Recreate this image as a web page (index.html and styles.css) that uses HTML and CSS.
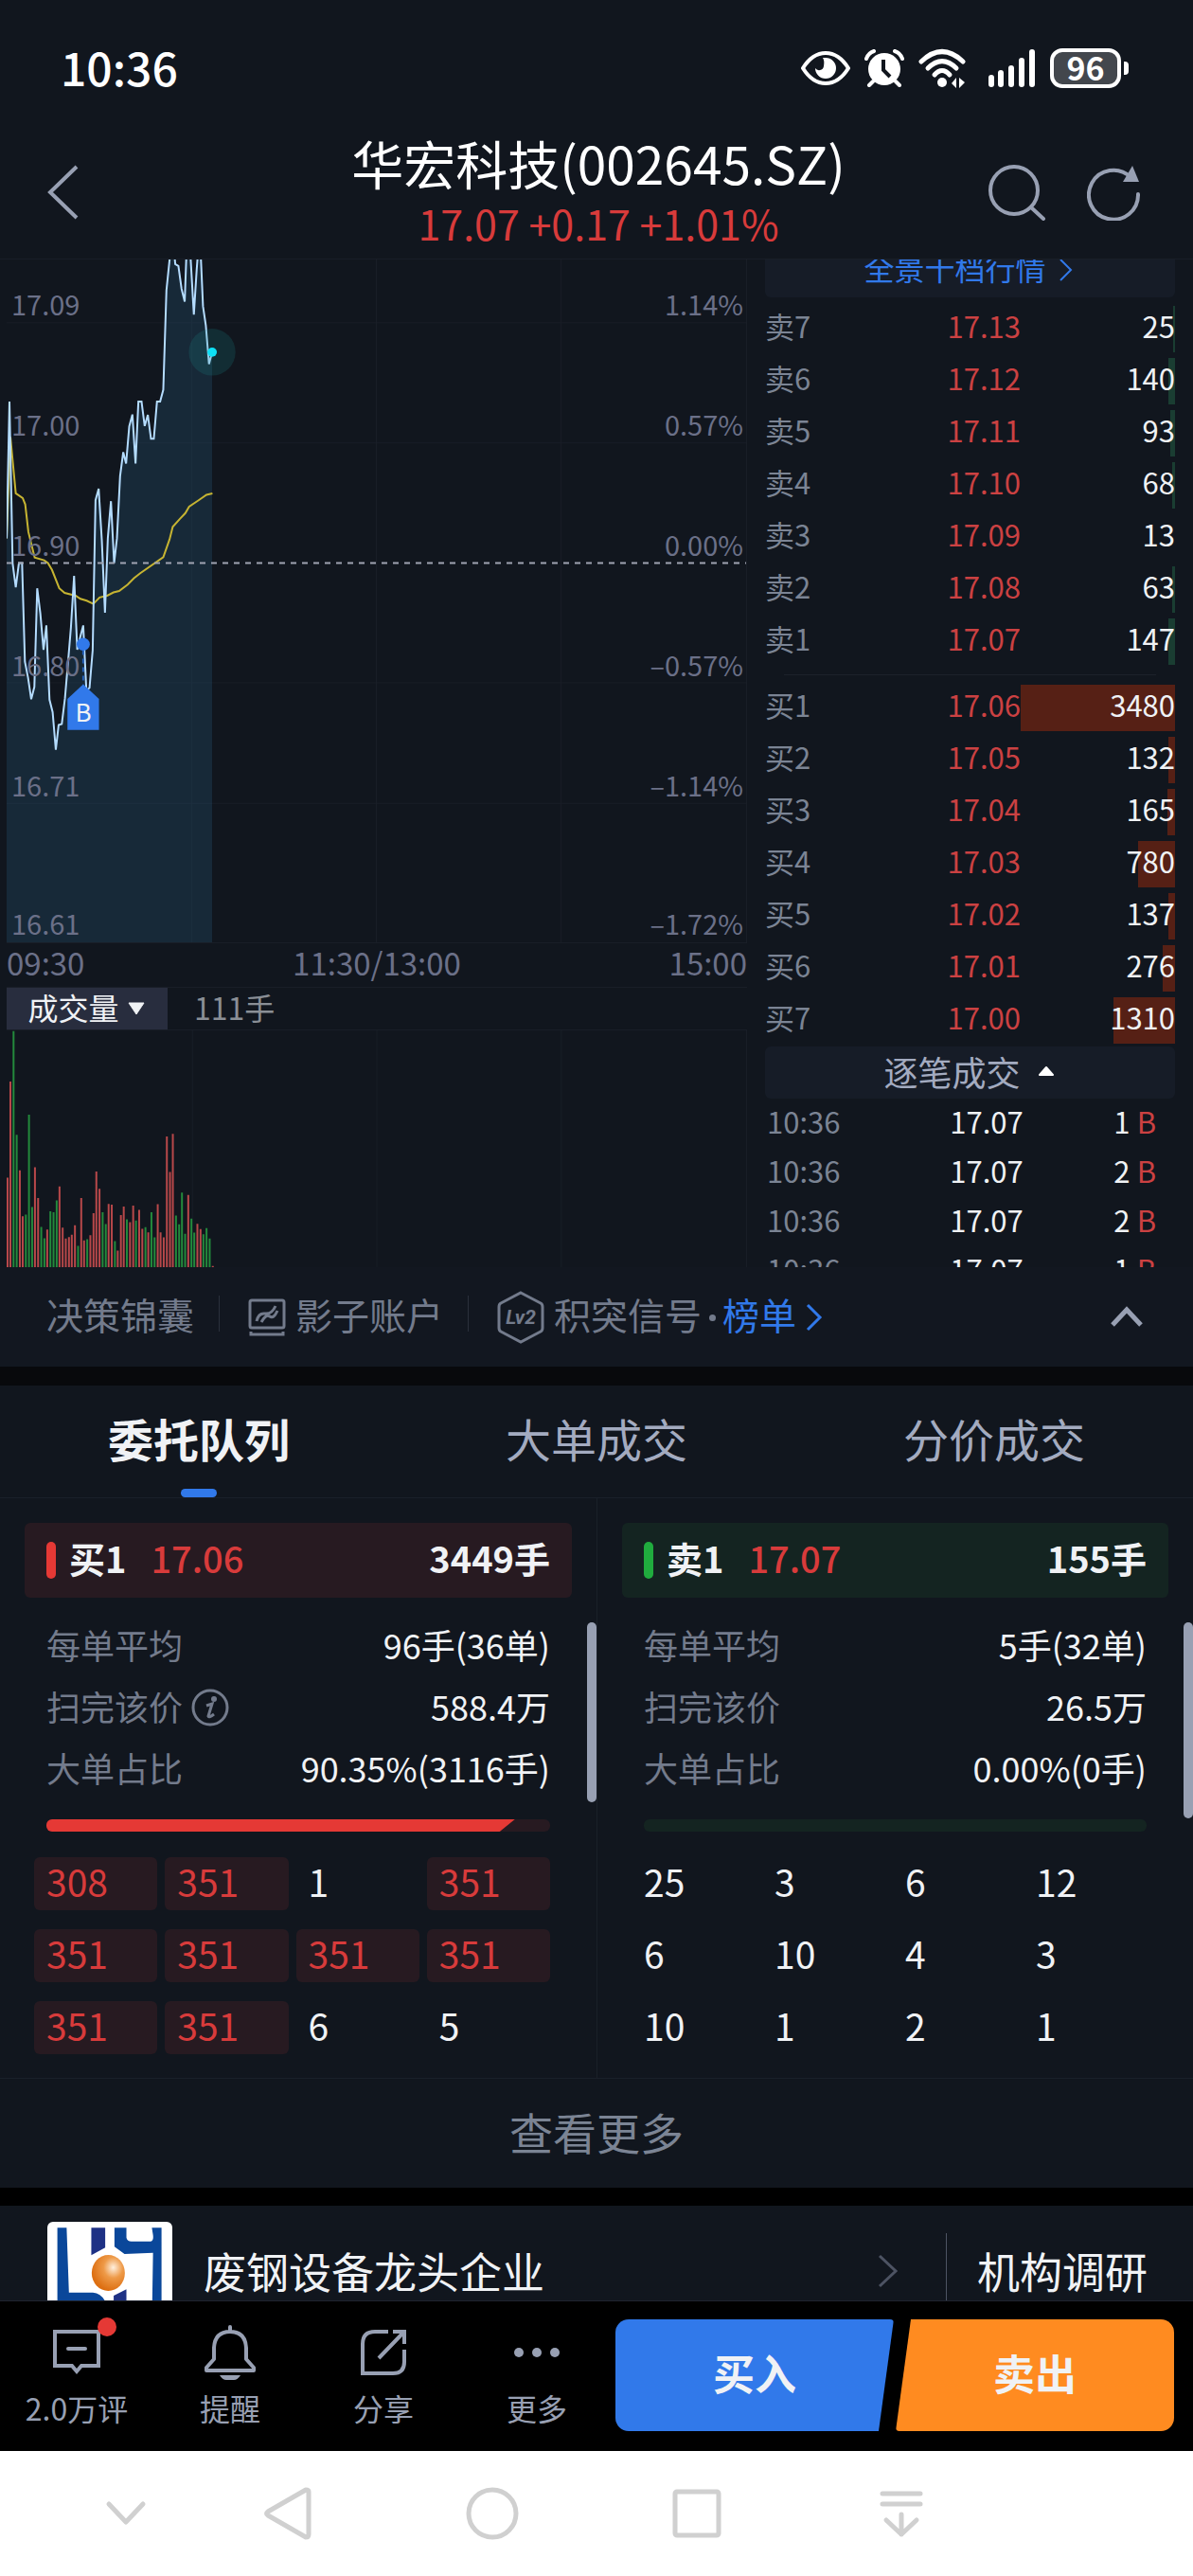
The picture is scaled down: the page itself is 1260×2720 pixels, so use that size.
FILE: index.html
```html
<!DOCTYPE html>
<html lang="zh-CN">
<head>
    <meta charset="UTF-8">
    <meta name="viewport" content="width=device-width, initial-scale=1">
    <title>华宏科技(002645.SZ)</title>
    <link rel="stylesheet" href="styles.css">
</head>
<body>
<!-- 状态栏 -->
<div class="status">
    <span class="clock">10:36</span>
    <div class="status-icons">
        <svg width="52" height="40" viewBox="0 0 52 40"><path d="M2 20Q12 4 26 4T50 20Q40 36 26 36T2 20Z" fill="none" stroke="#fff" stroke-width="4"/><path d="M26 9A11 11 0 1 1 15 20A5 5 0 0 0 24 18Q25 12 23 9Z" fill="#fff"/></svg>
        <svg width="42" height="40" viewBox="0 0 42 40"><circle cx="21" cy="21" r="17" fill="#fff"/><path d="M2 10Q4 4 10 2M40 10Q38 4 32 2M9 34L5 38M33 34L37 38" fill="none" stroke="#fff" stroke-width="4" stroke-linecap="round"/><path d="M20 11V22L27 29" fill="none" stroke="#11161e" stroke-width="4"/></svg>
        <svg width="58" height="42" viewBox="0 0 58 42"><g fill="none" stroke="#fff" stroke-width="5" stroke-linecap="round"><path d="M3 14Q25 -7 47 14"/><path d="M10 21Q25 6 40 21"/><path d="M17 28Q25 19 33 28"/></g><circle cx="25" cy="36" r="5" fill="#fff"/><path d="M35 37L40 31V42ZM43 31V42L49 36Z" fill="#fff"/></svg>
        <svg width="51" height="42" viewBox="0 0 51 42"><path d="M4 31V38M14 26V38M25 21V38M36 13V38M47 4V38" stroke="#fff" stroke-width="6" stroke-linecap="round"/></svg>
        <span class="battery">96</span>
    </div>
</div>

<!-- 标题 -->
<header class="header">
    <button class="icon-btn" aria-label="返回"><svg width="34" height="58" viewBox="0 0 34 58"><path d="M31 2L3 29L31 56" fill="none" stroke="#98a0b3" stroke-width="4"/></svg></button>
    <div class="title">
        <h1>华宏科技(002645.SZ)</h1>
        <p>17.07 +0.17 +1.01%</p>
    </div>
    <div class="header-right">
        <button class="icon-btn" aria-label="搜索"><svg width="62" height="60" viewBox="0 0 62 60"><circle cx="27" cy="28" r="25" fill="none" stroke="#98a0b3" stroke-width="4"/><path d="M45 46L58 58" stroke="#98a0b3" stroke-width="4" stroke-linecap="round"/></svg></button>
        <button class="icon-btn" aria-label="刷新"><svg width="58" height="60" viewBox="0 0 58 60"><path d="M46 14A26 26 0 1 0 54 32" fill="none" stroke="#98a0b3" stroke-width="4" stroke-linecap="round"/><path d="M48 2L55 19L38 19Z" fill="#98a0b3"/></svg></button>
    </div>
</header>

<!-- 行情 -->
<main class="quote">
    <section class="charts">
        <div class="price-chart">
            <svg class="plot" viewBox="21 28 2346 1489" preserveAspectRatio="none">
                <path class="grid" d="M21 166H2367M21 428H2367M21 951H2367M21 1214H2367M608 28V1517M1194 28V1517M1780 28V1517"/>
                <path class="area" d="M21 636L30 338L40 690L50 743L60 690H70L79 905L89 940L99 987L109 960L118 745L128 800L138 879L147 826L157 988L167 1015L177 1097L186 1043L196 1041L206 985L216 905L225 830L235 718L245 879L255 850L264 826L274 968L284 962L294 880L303 553L313 528L323 640L333 798L342 636L352 555L362 690L371 636L381 500L391 448L400 473L410 392L420 366L430 473L439 338H449L459 391L469 367L479 419H488L498 338H508L518 312L528 95L540 15H553L556 38L566 42L576 92L586 120L592 5H603L615 148L624 50L629 5H636L644 130L653 172L663 256L673 230V1517H21Z"/>
                <path class="avg" d="M21 636L33 415L50 538L72 548L80 562L90 622L100 650L110 678L140 684L152 690L165 705L188 745L205 755L240 761L255 768L275 772L296 779L316 765L340 761L360 754L378 751L405 737L425 723L445 712L518 677L538 638L548 611L570 594L588 581L600 567L630 553L655 541L674 538"/>
                <path class="price" d="M21 636L30 338L40 690L50 743L60 690H70L79 905L89 940L99 987L109 960L118 745L128 800L138 879L147 826L157 988L167 1015L177 1097L186 1043L196 1041L206 985L216 905L225 830L235 718L245 879L255 850L264 826L274 968L284 962L294 880L303 553L313 528L323 640L333 798L342 636L352 555L362 690L371 636L381 500L391 448L400 473L410 392L420 366L430 473L439 338H449L459 391L469 367L479 419H488L498 338H508L518 312L528 95L540 15H553L556 38L566 42L576 92L586 120L592 5H603L615 148L624 50L629 5H636L644 130L653 172L663 256L673 230"/>
                <path class="zero" d="M21 690H2367"/>
                <ellipse class="glow" cx="673" cy="230" rx="74" ry="51"/>
                <ellipse cx="673" cy="230" rx="15" ry="10" fill="#0ee0f5"/>
                <path class="stem" d="M264 880V955"/>
                <ellipse cx="264" cy="867" rx="21" ry="14" fill="#3179ea"/>
                <path d="M264 954L314 986V1054H214V986Z" fill="#3179ea"/>
            </svg>
            <span class="marker">B</span>
            <div class="scale">
                <p><span>17.09</span><span>1.14%</span></p>
                <p><span>17.00</span><span>0.57%</span></p>
                <p><span>16.90</span><span>0.00%</span></p>
                <p><span>16.80</span><span>–0.57%</span></p>
                <p><span>16.71</span><span>–1.14%</span></p>
                <p><span>16.61</span><span>–1.72%</span></p>
            </div>
        </div>
        <div class="times"><span>09:30</span><span>11:30/13:00</span><span>15:00</span></div>
        <div class="vol-head">
            <button class="vol-btn">成交量<svg width="18" height="14" viewBox="0 0 18 14"><path d="M1 1H17L9 13Z" fill="#f0f2f5" stroke="#f0f2f5" stroke-linejoin="round"/></svg></button>
            <span>111手</span>
        </div>
        <svg class="vol-chart" viewBox="18 320 2349 753" preserveAspectRatio="none">
            <path class="grid" d="M608 320V1073M1194 320V1073M1780 320V1073"/>
            <path class="bar-red" d="M21 788V1073M30 483V1073M60 765V1073M69 911V1073M108 755V1073M118 853V1073M147 953V1073M186 816V1073M196 947V1073M206 982V1073M216 977V1073M225 970V1073M235 940V1073M255 853V1073M264 988V1073M284 971V1073M294 901V1073M303 769V1073M313 824V1073M342 872V1073M352 874V1073M371 1020V1073M381 907V1073M390 880V1073M410 930V1073M420 877V1073M439 891V1073M449 951V1073M468 962V1073M498 873V1073M507 962V1073M517 978V1073M527 657V1073M537 770V1073M546 649V1073M595 843V1073M624 935V1073M634 952V1073M673 1069V1073"/>
            <path class="bar-green" d="M40 322V1073M50 652V1073M79 906V1073M89 588V1073M99 882V1073M128 945V1073M138 981V1073M157 895V1073M167 898V1073M177 861V1073M245 1005V1073M274 984V1073M323 898V1073M333 936V1073M362 990V1073M400 921V1073M429 925V1073M459 946V1073M478 898V1073M488 978V1073M556 909V1073M566 937V1073M575 836V1073M585 967V1073M605 919V1073M614 963V1073M643 968V1073M653 949V1073M663 982V1073"/>
        </svg>
    </section>

    <section class="book">
        <a class="depth-link" href="#">全景十档行情<svg width="14" height="24" viewBox="0 0 14 24"><path d="M1 1L12 12L1 23" fill="none" stroke="#3179ea" stroke-width="2"/></svg></a>
        <table class="levels sell">
            <tr><th>卖7</th><td>17.13</td><td><i style="width:1%"></i><b>25</b></td></tr>
            <tr><th>卖6</th><td>17.12</td><td><i style="width:4%"></i><b>140</b></td></tr>
            <tr><th>卖5</th><td>17.11</td><td><i style="width:3%"></i><b>93</b></td></tr>
            <tr><th>卖4</th><td>17.10</td><td><i style="width:2%"></i><b>68</b></td></tr>
            <tr><th>卖3</th><td>17.09</td><td><b>13</b></td></tr>
            <tr><th>卖2</th><td>17.08</td><td><i style="width:2%"></i><b>63</b></td></tr>
            <tr><th>卖1</th><td>17.07</td><td><i style="width:4%"></i><b>147</b></td></tr>
        </table>
        <hr>
        <table class="levels buy">
            <tr><th>买1</th><td>17.06</td><td><i style="width:100%"></i><b>3480</b></td></tr>
            <tr><th>买2</th><td>17.05</td><td><i style="width:4%"></i><b>132</b></td></tr>
            <tr><th>买3</th><td>17.04</td><td><i style="width:5%"></i><b>165</b></td></tr>
            <tr><th>买4</th><td>17.03</td><td><i style="width:24%"></i><b>780</b></td></tr>
            <tr><th>买5</th><td>17.02</td><td><i style="width:4%"></i><b>137</b></td></tr>
            <tr><th>买6</th><td>17.01</td><td><i style="width:8%"></i><b>276</b></td></tr>
            <tr><th>买7</th><td>17.00</td><td><i style="width:40%"></i><b>1310</b></td></tr>
        </table>
        <button class="tick-head">逐笔成交<svg width="18" height="12" viewBox="0 0 18 12"><path d="M2 10H16L9 2Z" fill="#fff" stroke="#fff" stroke-width="2" stroke-linejoin="round"/></svg></button>
        <table class="ticks">
            <tr><th>10:36</th><td>17.07</td><td>1</td><td>B</td></tr>
            <tr><th>10:36</th><td>17.07</td><td>2</td><td>B</td></tr>
            <tr><th>10:36</th><td>17.07</td><td>2</td><td>B</td></tr>
            <tr><th>10:36</th><td>17.07</td><td>1</td><td>B</td></tr>
        </table>
    </section>
</main>

<!-- 工具条 -->
<nav class="tools">
    <a href="#">决策锦囊</a>
    <a href="#"><svg width="40" height="42" viewBox="0 0 40 42"><rect x="2" y="3" width="36" height="29" rx="2" fill="none" stroke="#737b8c" stroke-width="3"/><path d="M3 36V39H37V36M9 25Q11 16 18 17T29 9M14 26Q19 17 23 20T31 14" fill="none" stroke="#737b8c" stroke-width="3"/></svg>影子账户</a>
    <a href="#"><svg width="50" height="56" viewBox="0 0 50 56"><path d="M25 2L46 13Q48 14 48 17V39Q48 42 46 43L25 54L4 43Q2 42 2 39V17Q2 14 4 13Z" fill="none" stroke="#737b8c" stroke-width="3"/><text x="25" y="35" text-anchor="middle">Lv2</text></svg><span>积突信号<span class="dot"></span><em>榜单</em></span><svg width="18" height="30" viewBox="0 0 18 30"><path d="M2 2L15 15L2 28" fill="none" stroke="#3179ea" stroke-width="3"/></svg></a>
    <button class="icon-btn" aria-label="展开"><svg width="36" height="24" viewBox="0 0 36 24"><path d="M3 20L18 4L33 20" fill="none" stroke="#98a0b3" stroke-width="5"/></svg></button>
</nav>

<!-- 委托队列 -->
<section class="queue">
    <div class="tabs">
        <button class="tab on">委托队列</button>
        <button class="tab">大单成交</button>
        <button class="tab">分价成交</button>
    </div>
    <div class="panels">
        <div class="panel red">
            <div class="panel-head"><i></i><b>买1</b><strong>17.06</strong><b class="total">3449手</b></div>
            <dl>
                <div><dt>每单平均</dt><dd>96手(36单)</dd></div>
                <div><dt>扫完该价<svg width="42" height="42" viewBox="0 0 42 42"><circle cx="21" cy="21" r="18" fill="none" stroke="#737b8c" stroke-width="3"/><circle cx="25" cy="12" r="3" fill="#737b8c"/><path d="M17 19L23 17L19 30Q20 32 25 28" fill="none" stroke="#737b8c" stroke-width="3"/></svg></dt><dd>588.4万</dd></div>
                <div><dt>大单占比</dt><dd>90.35%(3116手)</dd></div>
            </dl>
            <div class="progress"><i style="width:93%"></i></div>
            <div class="orders">
                <span class="big">308</span><span class="big">351</span><span>1</span><span class="big">351</span>
                <span class="big">351</span><span class="big">351</span><span class="big">351</span><span class="big">351</span>
                <span class="big">351</span><span class="big">351</span><span>6</span><span>5</span>
            </div>
            <span class="scroll"></span>
        </div>
        <div class="panel green">
            <div class="panel-head"><i></i><b>卖1</b><strong>17.07</strong><b class="total">155手</b></div>
            <dl>
                <div><dt>每单平均</dt><dd>5手(32单)</dd></div>
                <div><dt>扫完该价</dt><dd>26.5万</dd></div>
                <div><dt>大单占比</dt><dd>0.00%(0手)</dd></div>
            </dl>
            <div class="progress"></div>
            <div class="orders">
                <span>25</span><span>3</span><span>6</span><span>12</span>
                <span>6</span><span>10</span><span>4</span><span>3</span>
                <span>10</span><span>1</span><span>2</span><span>1</span>
            </div>
            <span class="scroll long"></span>
        </div>
    </div>
    <button class="more">查看更多</button>
</section>

<!-- 公司简介 -->
<section class="company">
    <svg class="logo" viewBox="122 108 324 396" preserveAspectRatio="none">
        <defs><radialGradient id="ball" cx="65%" cy="35%" r="65%"><stop offset="0" stop-color="#fff0df"/><stop offset="45%" stop-color="#ee9a48"/><stop offset="100%" stop-color="#dd6f12"/></radialGradient></defs>
        <path d="M148 127H172L178 332H240Q262 335 272 360H148Z" fill="#0a479a"/>
        <path d="M236 127H272V190L236 214Z" fill="#1e3185"/>
        <path d="M296 127H327V158Q329 170 340 170H390Q398 168 396 150L393 127H418V360H394L396 206L322 210L296 187Z" fill="#0a479a"/>
        <path d="M294 342L327 322V360H294Z" fill="#1e3185"/>
        <ellipse cx="280" cy="270" rx="43" ry="57" fill="url(#ball)"/>
    </svg>
    <a class="intro" href="#">废钢设备龙头企业<svg width="24" height="36" viewBox="0 0 24 36"><path d="M3 2L20 18L3 34" fill="none" stroke="#4d5363" stroke-width="3"/></svg></a>
    <a class="research" href="#">机构调研</a>
</section>

<!-- 底部操作 -->
<footer class="actions">
    <button class="act"><svg width="52" height="60" viewBox="0 0 52 60"><path d="M3 9H49V45H31L26 51L21 45H3Z" fill="none" stroke="#98a0b3" stroke-width="4"/><path d="M17 27H35" stroke="#98a0b3" stroke-width="4" stroke-linecap="round"/></svg><span>2.0万评</span><i class="badge"></i></button>
    <button class="act"><svg width="56" height="60" viewBox="0 0 56 60"><path d="M28 4V8M28 9Q12 9 11 26V38L3 47V50H53V47L45 38V26Q44 9 28 9Z" fill="none" stroke="#98a0b3" stroke-width="4" stroke-linejoin="round" stroke-linecap="round"/><path d="M17 55H39Q36 60 32 60H24Q20 60 17 55Z" fill="#98a0b3"/></svg><span>提醒</span></button>
    <button class="act"><svg width="52" height="60" viewBox="0 0 52 60"><path d="M31 9H17Q4 9 4 22V53H36Q48 53 48 41V28M36 9H48V22M47 10L21 37" fill="none" stroke="#98a0b3" stroke-width="4"/></svg><span>分享</span></button>
    <button class="act"><svg width="52" height="60" viewBox="0 0 52 60"><g fill="#98a0b3"><circle cx="7" cy="31" r="5"/><circle cx="26" cy="31" r="5"/><circle cx="45" cy="31" r="5"/></g></svg><span>更多</span></button>
    <div class="trade">
        <button class="buy-btn">买入</button>
        <button class="sell-btn">卖出</button>
    </div>
</footer>

<!-- 系统导航 -->
<nav class="sysnav">
    <button aria-label="收起"><svg width="44" height="28" viewBox="0 0 44 28"><path d="M4 4L22 23L40 4"/></svg></button>
    <button aria-label="返回"><svg width="52" height="58" viewBox="0 0 52 58"><path d="M45 4L5 27Q2 29 5 31L45 54Q48 54 48 51V6Q48 4 45 4Z"/></svg></button>
    <button aria-label="主页"><svg width="56" height="56" viewBox="0 0 56 56"><circle cx="28" cy="28" r="25"/></svg></button>
    <button aria-label="最近任务"><svg width="52" height="52" viewBox="0 0 52 52"><rect x="3" y="3" width="46" height="46" rx="2"/></svg></button>
    <button aria-label="下拉"><svg width="48" height="52" viewBox="0 0 48 52"><path d="M4 5H44M4 16H44M24 27V48M8 33L24 48L40 33"/></svg></button>
</nav>
</body>
</html>
```

FILE: styles.css
```css
*{
    box-sizing:border-box;
    padding:0;
    margin:0;
}

body{
    background-color:#11161e;
    color:#f0f2f5;
    font-family:"Noto Sans CJK SC", sans-serif;
    font-size:36px;
}

button{
    border:0;
    background:none;
    color:inherit;
    font:inherit;
    cursor:pointer;
}

a{
    color:inherit;
    text-decoration:none;
}

i, em{
    font-style:normal;
}

svg{
    display:block;
    flex:none;
}

.icon-btn{
    display:flex;
}

/* 状态栏 */
.status{
    display:flex;
    justify-content:space-between;
    align-items:center;
    height:139px;
    padding:5px 68px 0 64px;
    color:#fff;
}

.clock{
    padding-bottom:4px;
    font-size:48px;
    font-weight:500;
}

.status-icons{
    display:flex;
    align-items:center;
    gap:15px;
}

.battery{
    position:relative;
    width:75px;
    height:42px;
    margin-right:8px;
    border:4px solid #fff;
    border-radius:13px;
    background-color:#43474d;
    font-size:34px;
    font-weight:700;
    line-height:32px;
    text-align:center;
}

.battery::after{
    content:"";
    position:absolute;
    right:-12px;
    top:10px;
    width:5px;
    height:14px;
    border-radius:0 4px 4px 0;
    background-color:#fff;
}

/* 标题 */
.header{
    display:grid;
    grid-template-columns:170px 1fr 162px;
    align-items:center;
    height:135px;
    padding:0 54px 6px 50px;
    border-bottom:1px solid #191e27;
}

.title{
    text-align:center;
    white-space:nowrap;
}

.title h1{
    color:#fff;
    font-size:55px;
    font-weight:400;
    line-height:64px;
}

.title p{
    color:#d83b3b;
    font-size:43px;
    line-height:64px;
}

.header-right{
    display:flex;
    justify-content:flex-end;
    gap:42px;
}

/* 行情 */
.quote{
    display:grid;
    grid-template-columns:782fr 433fr;
    column-gap:19px;
    height:1064px;
    padding:0 19px 0 7px;
    overflow:hidden;
}

.price-chart{
    position:relative;
    height:722px;
    border-right:1px solid #191e27;
    border-bottom:1px solid #191e27;
}

.plot{
    width:100%;
    height:100%;
}

.plot path, .vol-chart path{
    vector-effect:non-scaling-stroke;
}

.grid{
    fill:none;
    stroke:#191e27;
    stroke-width:1px;
}

.area{
    fill:#2d6e96;
    fill-opacity:.22;
}

.price{
    fill:none;
    stroke:#b4dcff;
    stroke-width:2px;
}

.avg{
    fill:none;
    stroke:#c6b432;
    stroke-width:2px;
}

.zero{
    stroke:#a0a4b2;
    stroke-width:2px;
    stroke-dasharray:6 6;
}

.glow{
    fill:#1a8a8c;
    fill-opacity:.2;
}

.stem{
    stroke:#2560b8;
    stroke-width:2px;
    stroke-dasharray:5 4;
}

.marker{
    position:absolute;
    left:64px;
    top:460px;
    width:34px;
    font-size:26px;
    line-height:34px;
    text-align:center;
}

/* 坐标刻度, 压在曲线上 */
.scale{
    position:absolute;
    inset:0;
    display:grid;
    grid-template-rows:67px repeat(4, 127px) 146px;
    padding:0 3px 0 5px;
    color:#6b7088;
    font-size:29px;
    line-height:34px;
}

.scale p{
    display:flex;
    justify-content:space-between;
    align-items:flex-end;
    padding-bottom:4px;
}

.times{
    display:flex;
    justify-content:space-between;
    height:46px;
    color:#6b7088;
    font-size:33px;
    line-height:40px;
}

.vol-head{
    display:flex;
    gap:28px;
    height:46px;
    border-top:1px solid #191e27;
    border-bottom:1px solid #191e27;
    color:#8a8f96;
    font-size:32px;
    line-height:40px;
}

.vol-btn{
    display:flex;
    align-items:center;
    justify-content:center;
    gap:9px;
    width:170px;
    padding:0 2px 4px 0;
    background-color:#282d3e;
    color:#f0f2f5;
}

.vol-btn svg{
    margin-top:4px;
}

.vol-chart{
    width:100%;
    height:250px;
    border-right:1px solid #191e27;
}

.bar-red, .bar-green{
    fill:none;
    stroke:#b8484a;
    stroke-width:2px;
}

.bar-green{
    stroke:#238a3c;
}

/* 盘口 */
.depth-link{
    display:flex;
    justify-content:center;
    align-items:flex-end;
    gap:14px;
    height:40px;
    margin-bottom:6px;
    padding:0 4px 14px 0;
    overflow:hidden;
    border-radius:0 0 6px 6px;
    background-color:#161c27;
    color:#3179ea;
    font-size:32px;
    line-height:36px;
}

.depth-link svg{
    margin-bottom:3px;
}

.book table{
    width:100%;
    table-layout:fixed;
    border-collapse:collapse;
    font-size:31px;
    line-height:40px;
}

.book th{
    color:#7b8494;
    font-weight:400;
    text-align:left;
}

.levels tr{
    height:55px;
}

.levels th, .levels td{
    padding-bottom:8px;
}

.levels td{
    width:163px;
    color:#cb4142;
    text-align:right;
}

.levels td:last-child{
    position:relative;
    color:#f0f2f5;
}

.levels i{
    position:absolute;
    right:0;
    top:3px;
    bottom:3px;
    background-color:#1a3d32;
}

.buy i{
    background-color:#562015;
}

.levels b{
    position:relative;
    font-weight:400;
}

.book hr{
    margin:7px 20px;
    border:0;
    border-top:1px solid #1c212a;
}

.tick-head{
    display:flex;
    justify-content:center;
    align-items:center;
    gap:18px;
    width:100%;
    height:55px;
    padding:0 2px 3px 0;
    border-radius:6px;
    background-color:#161c27;
    color:#a3abc0;
    line-height:40px;
}

.ticks tr{
    height:52px;
}

.ticks th, .ticks td{
    padding-bottom:4px;
}

.ticks th{
    padding-left:2px;
}

.ticks td{
    width:37%;
    text-align:right;
}

.ticks td:nth-child(3){
    width:26%;
}

.ticks td:last-child{
    width:11%;
    padding-right:20px;
    color:#cb4142;
}

/* 工具条 */
.tools{
    display:flex;
    align-items:center;
    height:105px;
    padding:0 52px 0 49px;
    background-color:#121720;
    color:#737b8c;
    font-size:39px;
    line-height:50px;
}

.tools a{
    display:flex;
    align-items:center;
    gap:10px;
    padding-bottom:8px;
}

.tools a svg{
    margin-top:8px;
}

.tools a + a{
    margin-left:26px;
}

.tools a + a::before{
    content:"";
    width:1px;
    height:38px;
    margin-right:20px;
    background-color:#2a303b;
}

.tools text{
    fill:#737b8c;
    font-family:Roboto, sans-serif;
    font-size:21px;
    font-style:italic;
    font-weight:700;
}

.dot{
    display:inline-block;
    width:7px;
    height:7px;
    margin:0 7px 9px 8px;
    border-radius:50%;
    background-color:#737b8c;
}

.tools em{
    color:#3179ea;
}

.tools .icon-btn{
    margin-left:auto;
}

/* 委托队列 */
.queue{
    border-top:20px solid #08090c;
}

.tabs{
    display:grid;
    grid-template-columns:repeat(3, 1fr);
    height:119px;
    border-bottom:1px solid #1a2029;
}

.tab{
    position:relative;
    padding-bottom:8px;
    color:#a3abc0;
    font-size:48px;
}

.tab.on{
    color:#f0f2f5;
    font-weight:700;
}

.tab.on::after{
    content:"";
    position:absolute;
    left:50%;
    bottom:0;
    width:38px;
    height:9px;
    margin-left:-19px;
    border-radius:5px;
    background-color:#3179ea;
}

.panels{
    display:grid;
    grid-template-columns:1fr 1fr;
}

.panel{
    position:relative;
    padding:26px 26px 25px;
}

.panel + .panel{
    border-left:1px solid #1a2029;
}

.panel-head{
    display:flex;
    align-items:center;
    height:79px;
    padding:0 23px 6px;
    border-radius:6px;
    background-color:#271a21;
    font-size:38px;
}

.green .panel-head{
    background-color:#142421;
}

.panel-head i{
    width:10px;
    height:39px;
    margin:6px 14px 0 0;
    border-radius:5px;
    background-color:#e53935;
}

.green .panel-head i{
    background-color:#20ac3e;
}

.panel-head b{
    font-weight:700;
}

.panel-head strong{
    margin-left:26px;
    color:#d83b3b;
    font-weight:500;
}

.panel-head .total{
    margin-left:auto;
}

.panel dl{
    padding:16px 23px 0;
}

.panel dl div{
    display:flex;
    justify-content:space-between;
    align-items:center;
    height:65px;
}

.panel dt{
    display:flex;
    align-items:center;
    gap:8px;
    color:#737b8c;
}

.panel dt svg{
    margin-top:4px;
}

.progress{
    height:13px;
    margin:23px 23px 27px;
    overflow:hidden;
    border-radius:6px;
    background-color:#271a21;
}

.green .progress{
    background-color:#142421;
}

.progress i{
    display:block;
    height:100%;
    background-color:#e53935;
    clip-path:polygon(0 0, 100% 0, calc(100% - 16px) 100%, 0 100%);
}

.orders{
    display:grid;
    grid-template-columns:repeat(4, 1fr);
    gap:20px 8px;
    padding:0 23px 0 10px;
    font-size:39px;
    line-height:50px;
}

.orders span{
    height:56px;
    padding-left:13px;
    border-radius:6px;
}

.orders .big{
    background-color:#271a21;
    color:#d83b3b;
}

.scroll{
    position:absolute;
    right:0;
    top:131px;
    width:10px;
    height:190px;
    border-radius:5px;
    background-color:#98a0b3;
}

.scroll.long{
    height:207px;
}

.more{
    width:100%;
    height:116px;
    padding-bottom:6px;
    border-top:1px solid #1a2029;
    color:#7b8494;
    font-size:46px;
}

/* 公司简介 */
.company{
    display:flex;
    height:119px;
    padding:17px 48px 0 50px;
    overflow:hidden;
    border-top:19px solid #000;
    font-size:45px;
    line-height:60px;
}

.logo{
    width:132px;
    height:132px;
    border-radius:6px;
    background-color:#fff;
}

.intro{
    display:flex;
    flex:1;
    justify-content:space-between;
    align-items:center;
    height:60px;
    margin:22px 49px 0 33px;
}

.research{
    height:110px;
    margin-top:12px;
    padding:10px 0 0 32px;
    border-left:1px solid #4d5363;
}

/* 底部操作 */
.actions{
    display:grid;
    grid-template-columns:repeat(4, 162fr) 612fr;
    align-items:center;
    height:159px;
    padding-bottom:2px;
    border-top:1px solid #1f2430;
    background-color:#000;
}

.act{
    position:relative;
    display:flex;
    flex-direction:column;
    align-items:center;
    gap:4px;
    padding-top:4px;
    color:#98a0b3;
    font-size:32px;
    line-height:50px;
}

.badge{
    position:absolute;
    top:-2px;
    left:50%;
    width:20px;
    height:20px;
    margin-left:22px;
    border-radius:50%;
    background-color:#e53935;
}

.trade{
    display:flex;
    gap:2px;
    height:118px;
    margin:0 20px 0 2px;
    font-size:44px;
    font-weight:700;
}

.trade button{
    flex:1;
    padding-bottom:6px;
    border-radius:14px 4px 4px 14px;
    background-color:#3179ea;
}

.trade .buy-btn{
    clip-path:polygon(0 0, 100% 0, calc(100% - 16px) 100%, 0 100%);
}

.trade .sell-btn{
    border-radius:4px 14px 14px 4px;
    background-color:#ff8b20;
    clip-path:polygon(16px 0, 100% 0, 100% 100%, 0 100%);
}

/* 系统导航 */
.sysnav{
    display:grid;
    grid-template-columns:126fr repeat(4, 216fr);
    height:132px;
    padding:0 200px 0 70px;
    background-color:#fff;
}

.sysnav button{
    display:flex;
    justify-content:center;
    align-items:center;
}

.sysnav svg{
    fill:none;
    stroke:#d0d0d0;
    stroke-width:5px;
    stroke-linecap:round;
    stroke-linejoin:round;
}
```
